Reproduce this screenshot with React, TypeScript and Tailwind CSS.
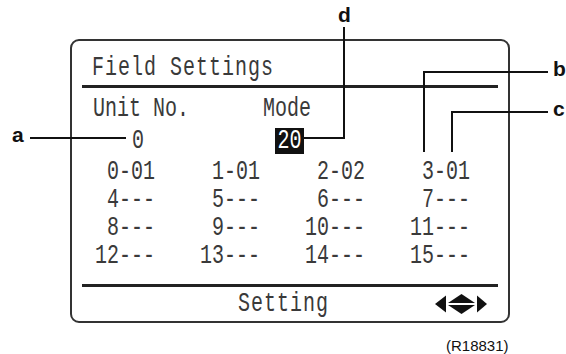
const lcd = "font-['Liberation_Mono',monospace] text-[20px] leading-none text-[#3a3a3a]";

const rows = [
  ['0-01', '1-01', '2-02', '3-01'],
  ['4---', '5---', '6---', '7---'],
  ['8---', '9---', '10---', '11---'],
  ['12---', '13---', '14---', '15---'],
];

function Txt({ children, className = '' }: { children: React.ReactNode; className?: string }) {
  return <span className={`inline-block scale-y-[1.35] ${className}`}>{children}</span>;
}

function Arrows() {
  return (
    <svg width="52" height="20" viewBox="0 0 52 20">
      <polygon points="0,10 11,1.5 11,18.5" fill="#111" />
      <polygon points="26.5,0 40,9 13,9" fill="#111" />
      <polygon points="13,11 40,11 26.5,20" fill="#111" />
      <polygon points="52,10 42,1.5 42,18.5" fill="#111" />
    </svg>
  );
}

function Callouts() {
  return (
    <svg className="pointer-events-none absolute left-0 top-0" width="566" height="354">
      <g stroke="#111" strokeWidth="2" fill="none">
        <line x1="30" y1="138" x2="126" y2="138" />
        <polyline points="304,138 344,138 344,27" />
        <polyline points="424,152 424,72 548,72" />
        <polyline points="452,152 452,112 548,112" />
      </g>
    </svg>
  );
}

const label = "absolute font-['Liberation_Sans',Arial,sans-serif] text-[21px] font-bold leading-none text-[#111]";

export default function App() {
  return (
    <div className="relative h-[354px] w-[566px] overflow-hidden bg-white">
      <div className="pl-[70px] pt-[39px]">
        <div className={`flex h-[284px] w-[440px] flex-col rounded-[9px] border-2 border-[#333] ${lcd}`}>
          <div className="mt-[12px] flex h-[30px] items-center pl-[20px] tracking-[1px]">
            <Txt>Field Settings</Txt>
          </div>
          <div className="mx-[10px] mt-[2px] h-[3px] bg-[#222]" />

          <div className="mt-[9px] flex h-[24px] items-center pl-[21px]">
            <Txt>Unit No.</Txt>
            <Txt className="ml-[74px]">Mode</Txt>
          </div>

          <div className="mt-[7px] flex h-[26px] items-center">
            <Txt className="ml-[60px]">0</Txt>
            <div className="ml-[131px] flex h-[26px] w-[29px] items-center justify-center bg-[#111] text-white">
              <Txt>20</Txt>
            </div>
          </div>

          <div className="mt-[4px] grid grid-cols-[83px_105px_105px_105px]">
            {rows.map((row, i) =>
              row.map((cell, j) => (
                <div key={`${i}-${j}`} className="flex h-[28px] items-center justify-end">
                  <Txt>{cell}</Txt>
                </div>
              )),
            )}
          </div>

          <div className="mx-[10px] mt-[14px] h-[3px] bg-[#222]" />

          <div className="mt-[3px] flex h-[27px] items-center pr-[21px]">
            <Txt className="ml-[166px] tracking-[1px]">Setting</Txt>
            <div className="ml-auto">
              <Arrows />
            </div>
          </div>
        </div>
      </div>

      <div className="mt-[15px] pl-[446px] font-['Liberation_Sans',Arial,sans-serif] text-[15px] leading-none text-[#111]">
        (R18831)
      </div>

      <Callouts />
      <span className={`${label} left-[12px] top-[124px]`}>a</span>
      <span className={`${label} left-[553px] top-[58px]`}>b</span>
      <span className={`${label} left-[553px] top-[98px]`}>c</span>
      <span className={`${label} left-[338px] top-[4px]`}>d</span>
    </div>
  );
}
